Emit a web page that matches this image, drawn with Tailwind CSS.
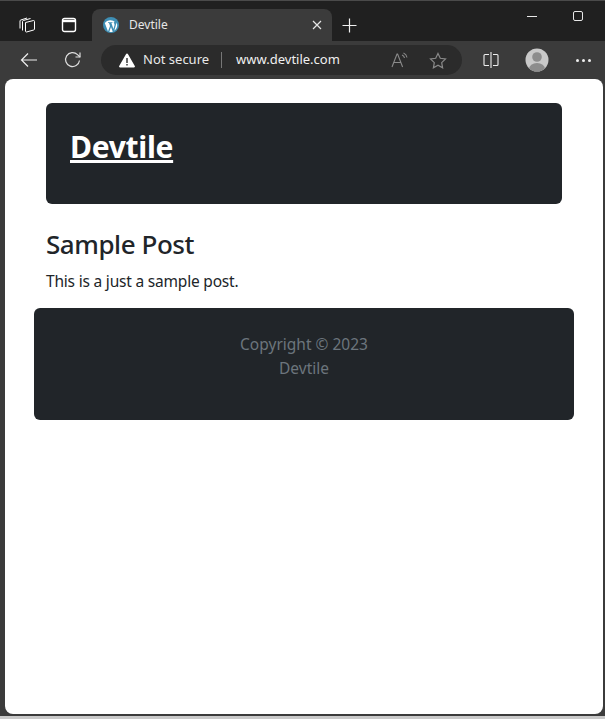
<!DOCTYPE html>
<html lang="en">
  <head>
    <meta charset="UTF-8" />
    <meta name="viewport" content="width=device-width, initial-scale=1.0" />
    <script src="https://cdn.jsdelivr.net/npm/@tailwindcss/browser@4"></script>
    <title>Devtile</title>
  </head>
  <body class="w-[605px] h-[719px] overflow-hidden bg-[#3b3b3b] font-['Noto_Sans',sans-serif] flex flex-col">
    <!-- tab strip -->
    <div class="h-[41px] shrink-0 bg-[#202020] border-t border-[#4a4a4a] flex items-end">
      <div class="w-[92px] h-[32px] flex items-center text-white">
        <svg class="ml-[18px] mt-[-1px]" width="18" height="18" viewBox="0 0 18 18" fill="none" stroke="currentColor" stroke-width="1">
          <path d="M7.500 6.500 15.500 4.500a1 1 0 0 1 1 1V13a1 1 0 0 1-.8 1L8.500 16a1 1 0 0 1-1-1z" />
          <path d="M4.500 14.500V5.500a1 1 0 0 1 .8-1L12.500 2.500" />
          <path d="M2 12.500V5a1 1 0 0 1 .8-1L9 2" />
        </svg>
        <svg class="ml-[25px] mt-[-1px]" width="16" height="16" viewBox="0 0 16 16" fill="none" stroke="currentColor" stroke-width="1.400">
          <rect x="1.500" y="1.500" width="13" height="13" rx="2" />
          <path d="M1.500 4h13" stroke-width="2.400" />
        </svg>
      </div>
      <div class="w-[240px] h-[32px] bg-[#3b3b3b] rounded-t-lg flex items-center pl-[11px] pr-[10px]">
        <svg width="16" height="16" viewBox="0 0 16 16">
          <circle cx="8" cy="8" r="8" fill="#3f8fb5" />
          <path d="M1.800 6 5 14.500l2-5.500-1-3H5V5.200h4.500V6h-1.100l2 6 1-3.500c.4-1.400-.2-2.100-.6-2.500-.3-.4.1-1 .8-1 .3 0 .5 0 .7.200A7 7 0 0 0 1.800 6z" fill="#fff" />
          <path d="M8 10 6.300 14.800a7 7 0 0 0 3.500 0zM13.600 5.500l-2.300 8.200a7 7 0 0 0 2.300-8.200z" fill="#fff" />
        </svg>
        <span class="ml-[10px] text-[12px] text-[#e6e6e6]">Devtile</span>
        <svg class="ml-auto" width="10" height="10" viewBox="0 0 10 10" stroke="#e6e6e6" stroke-width="1.200">
          <path d="M1 1l8 8M9 1l-8 8" />
        </svg>
      </div>
      <div class="w-[34px] h-[32px] flex items-center justify-center">
        <svg width="15" height="15" viewBox="0 0 15 15" stroke="#f0f0f0" stroke-width="1.200">
          <path d="M7.500 .5v14M.5 7.500h14" />
        </svg>
      </div>
      <div class="ml-auto h-[40px] flex items-start text-white">
        <div class="w-[10px] h-[1px] bg-[#e8e8e8] mt-[15px] mr-[36px]"></div>
        <div class="w-[10px] h-[10px] border border-[#e8e8e8] rounded-[2px] mt-[10px] mr-[22px]"></div>
      </div>
    </div>
    <!-- address bar row -->
    <div class="h-[38px] shrink-0 flex items-center">
      <svg class="ml-[20px]" width="18" height="16" viewBox="0 0 18 16" fill="none" stroke="#eee" stroke-width="1.200">
        <path d="M17 8H1.500M8 1.500 1.500 8 8 14.500" />
      </svg>
      <svg class="ml-[26px]" width="18" height="18" viewBox="0 0 18 18" fill="none" stroke="#ddd" stroke-width="1.200">
        <path d="M15.500 9.500A7 7 0 1 1 13.500 3.600L16 6" />
        <path d="M16 1.500V6h-4.500" />
      </svg>
      <div class="ml-[19px] w-[361px] h-[30px] rounded-full bg-[#2b2b2b] flex items-center pl-[18px] pr-[15px]">
        <svg width="16" height="15" viewBox="0 0 16 15">
          <path d="M8 .5a1 1 0 0 1 .9.5l6.900 12a1 1 0 0 1-.9 1.500H1.100a1 1 0 0 1-.9-1.500L7.100 1A1 1 0 0 1 8 .5z" fill="#fff" />
          <path d="M7.300 5h1.400v5H7.300zM7.300 11h1.400v1.500H7.300z" fill="#2b2b2b" />
        </svg>
        <span class="ml-[8px] text-[13px] text-[#e8e8e8]">Not secure</span>
        <span class="ml-[12px] w-[1px] h-[16px] bg-[#777]"></span>
        <span class="ml-[14px] text-[13px] text-[#f0f0f0]">www.devtile.com</span>
        <svg class="ml-auto" width="17" height="16" viewBox="0 0 17 16" fill="none" stroke="#8a8a8a" stroke-width="1.100">
          <path d="M1 15 6 2h.6l5 13M2.800 10.500h7" />
          <path d="M11 3a4 4 0 0 1 2.500 3M12.500 1a6 6 0 0 1 3.500 4.500" />
        </svg>
        <svg class="ml-[21px]" width="18" height="17" viewBox="0 0 18 17" fill="none" stroke="#8a8a8a" stroke-width="1.200">
          <path d="M9 1.500l2.300 4.800 5.200.7-3.800 3.600.9 5.200L9 13.300l-4.600 2.500.9-5.200L1.500 7l5.200-.7z" />
        </svg>
      </div>
      <svg class="ml-[21px]" width="16" height="16" viewBox="0 0 16 16" fill="none" stroke="#eee" stroke-width="1.100">
        <path d="M6 2.500H2a1 1 0 0 0-1 1v9a1 1 0 0 0 1 1h4M10 2.500h4a1 1 0 0 1 1 1v9a1 1 0 0 1-1 1h-4" />
        <path d="M8 0v16" />
      </svg>
      <svg class="ml-[26px]" width="24" height="24" viewBox="0 0 24 24">
        <defs>
          <clipPath id="avatar"><circle cx="12" cy="12" r="11.500" /></clipPath>
        </defs>
        <circle cx="12" cy="12" r="11.500" fill="#c9c9c9" />
        <g clip-path="url(#avatar)" fill="#8c8c8c">
          <circle cx="12" cy="9" r="4.800" />
          <ellipse cx="12" cy="21" rx="8" ry="6" />
        </g>
      </svg>
      <div class="ml-[27px] flex gap-[3px]">
        <span class="w-[3px] h-[3px] rounded-full bg-[#eee]"></span>
        <span class="w-[3px] h-[3px] rounded-full bg-[#eee]"></span>
        <span class="w-[3px] h-[3px] rounded-full bg-[#eee]"></span>
      </div>
    </div>
    <!-- page -->
    <div class="ml-[5px] w-[598px] h-[635px] shrink-0 bg-white rounded-lg pt-[24px] flex flex-col items-center text-[#212529]">
      <div class="w-[516px]">
        <header class="h-[101px] rounded-md bg-[#212529] pl-[24px] pt-[21px]">
          <a href="#" class="text-[30px] leading-[46px] tracking-[-0.3px] font-bold text-white underline">Devtile</a>
        </header>
        <h2 class="mt-[23px] text-[26px] leading-[34px] tracking-[-0.45px] font-medium">Sample Post</h2>
        <p class="mt-[8px] text-[15.5px] leading-[24px] tracking-[-0.2px]">This is a just a sample post.</p>
      </div>
      <footer class="mt-[15px] w-[540px] h-[112px] rounded-md bg-[#212529] pt-[24px] text-center text-[15.5px] leading-[24px] text-[#6c757d]">
        <p>Copyright © 2023</p>
        <p>Devtile</p>
      </footer>
    </div>
    <div class="mt-[2px] h-[3px] bg-[#c9c9c9]"></div>
  </body>
</html>
